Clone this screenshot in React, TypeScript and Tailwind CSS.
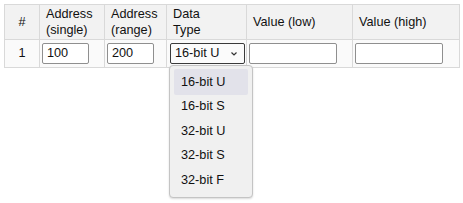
import React from "react";

const font = { fontFamily: '"Liberation Sans", Arial, sans-serif' };

export default function App() {
  const items = ["16-bit U", "16-bit S", "32-bit U", "32-bit S", "32-bit F"];
  return (
    <div
      className="relative w-[463px] h-[203px] bg-white pl-[4px] pt-[4px] text-[12.7px] text-[#111]"
      style={font}
    >
      <table className="border-collapse table-fixed w-[455px] border border-[#d9d9d9]">
        <colgroup>
          <col className="w-[35px]" />
          <col className="w-[65px]" />
          <col className="w-[62px]" />
          <col className="w-[80px]" />
          <col className="w-[106px]" />
          <col className="w-[107px]" />
        </colgroup>
        <thead>
          <tr className="h-[35px] bg-[#f2f2f2]">
            <th className="border border-[#d9d9d9] font-normal text-center align-middle leading-[16px]">#</th>
            <th className="border border-[#d9d9d9] font-normal text-left align-middle leading-[16px] pl-[6px]">
              Address
              <br />
              (single)
            </th>
            <th className="border border-[#d9d9d9] font-normal text-left align-middle leading-[16px] pl-[6px]">
              Address
              <br />
              (range)
            </th>
            <th className="border border-[#d9d9d9] font-normal text-left align-middle leading-[16px] pl-[6px]">
              Data
              <br />
              Type
            </th>
            <th className="border border-[#d9d9d9] font-normal text-left align-middle leading-[16px] pl-[6px]">
              Value (low)
            </th>
            <th className="border border-[#d9d9d9] font-normal text-left align-middle leading-[16px] pl-[6px]">
              Value (high)
            </th>
          </tr>
        </thead>
        <tbody>
          <tr className="h-[28px] bg-[#fafafa]">
            <td className="border border-[#d9d9d9] text-center align-middle">1</td>
            <td className="border border-[#d9d9d9] align-middle pl-[2px]">
              <div className="w-[47px] h-[21px] border border-[#8f8f8f] rounded-[2px] bg-white pl-[4px] leading-[19px]">100</div>
            </td>
            <td className="border border-[#d9d9d9] align-middle pl-[2px]">
              <div className="w-[47px] h-[21px] border border-[#8f8f8f] rounded-[2px] bg-white pl-[4px] leading-[19px]">200</div>
            </td>
            <td className="border border-[#d9d9d9] align-middle pl-[3px]">
              <div className="w-[75px] h-[21px] border border-[#3a3a3a] rounded-[2px] bg-[#fbfbfb] pl-[4px] pr-[6px] leading-[19px] flex items-center justify-between">
                <span>16-bit U</span>
                <svg width="6" height="4" viewBox="0 0 6 4" className="mr-[1px]">
                  <path d="M0.5 0.5 L3 3 L5.5 0.5" fill="none" stroke="#333" strokeWidth="1.2" />
                </svg>
              </div>
            </td>
            <td className="border border-[#d9d9d9] align-middle pl-[2px]">
              <div className="w-[88px] h-[21px] border border-[#8f8f8f] rounded-[2px] bg-white" />
            </td>
            <td className="border border-[#d9d9d9] align-middle pl-[2px]">
              <div className="w-[88px] h-[21px] border border-[#8f8f8f] rounded-[2px] bg-white" />
            </td>
          </tr>
        </tbody>
      </table>

      <div className="absolute left-[169px] top-[65px] w-[84px] h-[133px] bg-[#f0f0f0] border border-[#c4c4c4] rounded-[4px] shadow-[0_1px_2px_rgba(0,0,0,0.15)] pt-[3px] px-[4px]">
        {items.map((it, i) => (
          <div
            key={it}
            className={
              i === 0
                ? "h-[26px] leading-[26px] pl-[7px] bg-[#e2e2ea] rounded-[2px] mb-[-1px]"
                : "h-[24.5px] leading-[24.5px] pl-[7px]"
            }
          >
            {it}
          </div>
        ))}
      </div>
    </div>
  );
}
